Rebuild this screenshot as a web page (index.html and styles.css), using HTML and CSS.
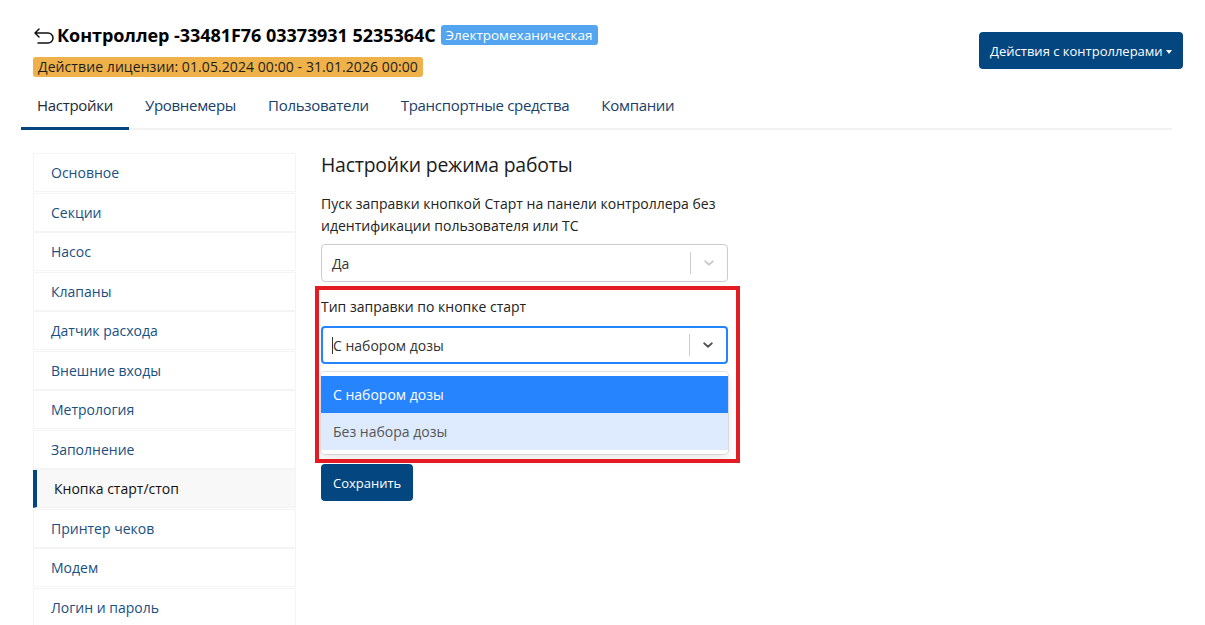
FILE: index.html
```html
<!DOCTYPE html>
<html lang="ru">
<head>
    <meta charset="UTF-8">
    <meta name="viewport" content="width=device-width, initial-scale=1.0">
    <title>Контроллер</title>
    <link rel="stylesheet" href="styles.css">
</head>
<body>
    <div class="page">
        <div class="header">
            <div class="header-info">
                <div class="title-row">
                    <svg class="back-icon" width="22" height="18" viewBox="0 0 22 18">
                        <path d="M6 2 L2 6 L6 10 M2 6 H15 a5 5 0 0 1 0 10 H5" fill="none" stroke="#111" stroke-width="1.5" stroke-linecap="round" stroke-linejoin="round"/>
                    </svg>
                    <h1>Контроллер -33481F76 03373931 5235364C</h1>
                    <span class="badge badge-type">Электромеханическая</span>
                </div>
                <span class="badge badge-license">Действие лицензии: 01.05.2024 00:00 - 31.01.2026 00:00</span>
            </div>
            <button class="btn-actions">Действия с контроллерами <span class="caret"></span></button>
        </div>

        <div class="tabs">
            <a class="tab active">Настройки</a>
            <a class="tab">Уровнемеры</a>
            <a class="tab">Пользователи</a>
            <a class="tab">Транспортные средства</a>
            <a class="tab">Компании</a>
        </div>

        <div class="content">
            <ul class="side-menu">
                <li>Основное</li>
                <li>Секции</li>
                <li>Насос</li>
                <li>Клапаны</li>
                <li>Датчик расхода</li>
                <li>Внешние входы</li>
                <li>Метрология</li>
                <li>Заполнение</li>
                <li class="active">Кнопка старт/стоп</li>
                <li>Принтер чеков</li>
                <li>Модем</li>
                <li>Логин и пароль</li>
            </ul>

            <div class="settings">
                <h2>Настройки режима работы</h2>

                <div class="field">
                    <label>Пуск заправки кнопкой Старт на панели контроллера без идентификации пользователя или ТС</label>
                    <div class="select">
                        <span class="select-value">Да</span>
                        <span class="select-sep"></span>
                        <svg class="chevron" width="14" height="14" viewBox="0 0 20 20"><path d="M4.5 7.5 L10 12.5 L15.5 7.5" fill="none" stroke="currentColor" stroke-width="2.6" stroke-linecap="round" stroke-linejoin="round"/></svg>
                    </div>
                </div>

                <div class="field field-open">
                    <label>Тип заправки по кнопке старт</label>
                    <div class="select focused">
                        <span class="select-value"><span class="cursor"></span>С набором дозы</span>
                        <span class="select-sep"></span>
                        <svg class="chevron" width="14" height="14" viewBox="0 0 20 20"><path d="M4.5 7.5 L10 12.5 L15.5 7.5" fill="none" stroke="currentColor" stroke-width="2.6" stroke-linecap="round" stroke-linejoin="round"/></svg>
                    </div>
                    <div class="select-menu">
                        <div class="option selected">С набором дозы</div>
                        <div class="option hovered">Без набора дозы</div>
                    </div>
                    <div class="highlight-box"></div>
                </div>

                <button class="btn-save">Сохранить</button>
            </div>
        </div>
    </div>
</body>
</html>
```

FILE: styles.css
```css
body {
    margin: 0;
    font-family: "Open Sans", Arial, sans-serif;
    background: #fff;
    color: #212529;
}
.page {
    padding: 19px 22px 0 21px;
}

/* header */
.header {
    display: flex;
    justify-content: space-between;
    align-items: flex-start;
    padding-left: 12px;
}
.title-row {
    display: flex;
    align-items: center;
    height: 32px;
}
.back-icon {
    margin-right: 2px;
    margin-top: 2px;
}
h1 {
    font-size: 18px;
    font-weight: 700;
    margin: 0 5px 0 0;
    letter-spacing: -0.05px;
    color: #000;
}
.badge {
    display: inline-block;
    font-size: 14px;
    line-height: 20px;
    padding: 0 5px;
    border-radius: 3px;
}
.badge-type {
    background: #52a5ee;
    color: #fff;
    font-size: 13.5px;
}
.badge-license {
    background: #efb149;
    color: #1d1d1d;
    margin-top: 6px;
    letter-spacing: 0.08px;
}
.btn-actions {
    margin-top: 13px;
    background: #034680;
    color: #fff;
    border: none;
    border-radius: 4px;
    font-family: inherit;
    font-size: 13px;
    height: 37px;
    padding: 0 11px;
}
.caret {
    display: inline-block;
    border-top: 4px solid #fff;
    border-left: 3px solid transparent;
    border-right: 3px solid transparent;
    vertical-align: 2px;
}

/* tabs */
.tabs {
    display: flex;
    margin-top: 13px;
    border-bottom: 2px solid #f2f2f2;
    margin-right: 11px;
}
.tab {
    padding: 5px 16px 12px;
    font-size: 15px;
    color: #17406a;
    border-bottom: 3px solid transparent;
    margin-bottom: -2px;
    letter-spacing: -0.3px;
}
.tab.active {
    border-bottom-color: #034680;
    color: #1b2a3a;
}

/* content */
.content {
    display: flex;
    padding: 21px 0 0 12px;
    gap: 25px;
}
.side-menu {
    list-style: none;
    margin: 3px 0 0;
    padding: 0;
    width: 263px;
    flex-shrink: 0;
}
.side-menu li {
    height: 37px;
    line-height: 37px;
    padding-left: 17px;
    font-size: 14px;
    color: #1a4f80;
    border: 1px solid #f4f4f4;
    border-top: none;
    box-shadow: 0 -1px 0 #f4f4f4;
    margin-bottom: 1.5px;
}
.side-menu li.active {
    background: #f8f8f8;
    border-left: 4px solid #034680;
    padding-left: 17px;
    color: #111;
}

.settings {
    width: 407px;
}
h2 {
    font-size: 19.4px;
    font-weight: 400;
    margin: 0 0 15px;
    color: #1b1b1b;
    letter-spacing: -0.2px;
}
.field {
    margin-bottom: 14px;
    position: relative;
}
.field label {
    display: block;
    font-size: 14px;
    line-height: 22px;
    color: #222;
    margin-bottom: 7px;
}
.field-open {
    margin-bottom: 10px;
}
.field-open label {
    margin-bottom: 8px;
}
.select {
    display: flex;
    align-items: center;
    height: 36px;
    border: 1px solid #cccccc;
    border-radius: 4px;
    background: #fff;
    font-size: 14px;
    color: #333;
}
.select.focused {
    border: 2px solid #2684ff;
    height: 34px;
}
.select-value {
    flex: 1;
    padding-left: 10px;
}
.select.focused .select-value {
    padding-left: 9px;
}
.cursor {
    display: inline-block;
    width: 1px;
    height: 17px;
    background: #333;
    vertical-align: -3px;
}
.select-sep {
    width: 1px;
    height: 22px;
    background: #ccc;
}
.chevron {
    color: #ccc;
    padding: 0 11px 0 11px;
}
.focused .chevron {
    color: #555;
}
.select-menu {
    margin-top: 8px;
    border-radius: 4px;
    padding: 4px 0;
    box-shadow: 0 0 0 1px rgba(0,0,0,0.1), 0 4px 11px rgba(0,0,0,0.1);
    font-size: 14px;
}
.option {
    height: 37px;
    line-height: 37px;
    padding-left: 12px;
}
.option.selected {
    background: #2684ff;
    color: #fff;
}
.option.hovered {
    background: #deebff;
    color: #555;
}
.highlight-box {
    position: absolute;
    left: -6px;
    right: -12px;
    top: -10px;
    bottom: -9px;
    border: 4px solid #e51b24;
    pointer-events: none;
}
.btn-save {
    background: #034680;
    color: #fff;
    border: none;
    border-radius: 4px;
    font-family: inherit;
    font-size: 13px;
    height: 37px;
    padding: 0 12px;
}
```
